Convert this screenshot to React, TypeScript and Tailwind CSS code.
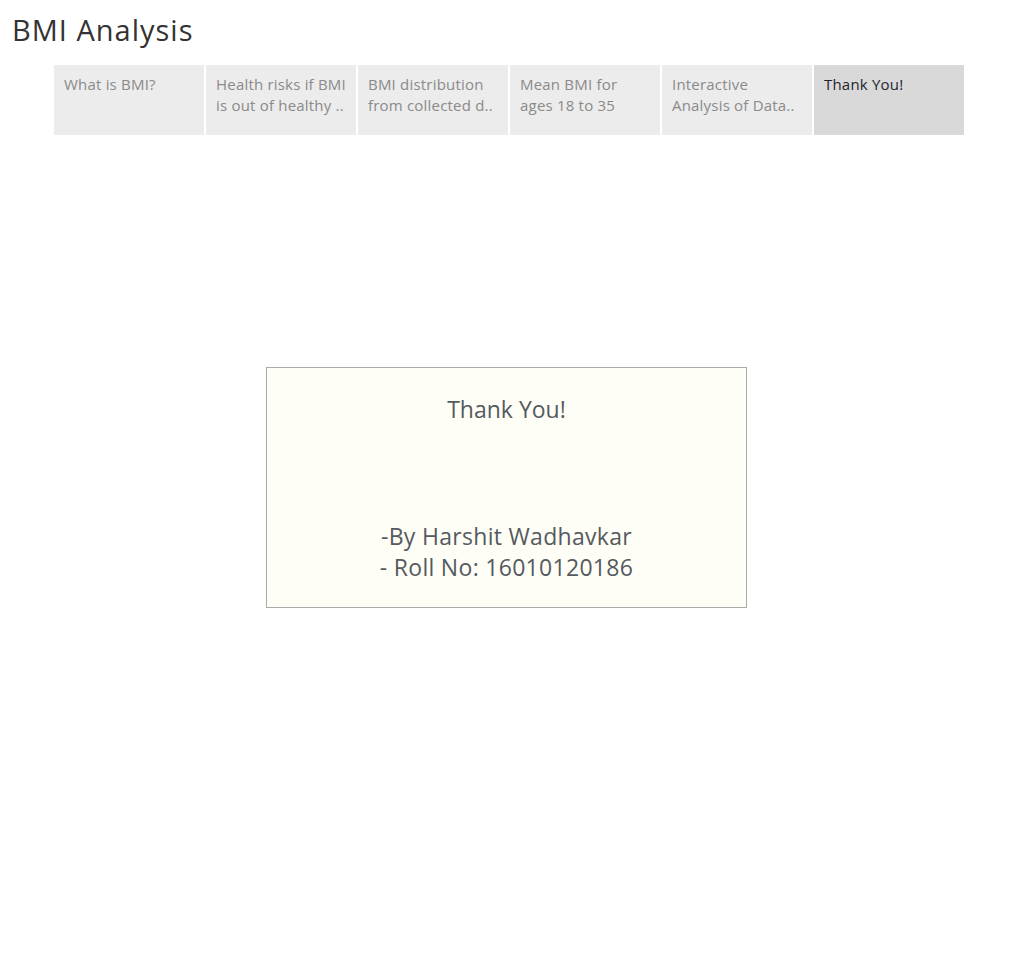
const tabs = [
  { label: 'What is BMI?', lines: ['What is BMI?'] },
  { label: 'Health risks', lines: ['Health risks if BMI', 'is out of healthy ..'] },
  { label: 'BMI distribution', lines: ['BMI distribution', 'from collected d..'] },
  { label: 'Mean BMI', lines: ['Mean BMI for', 'ages 18 to 35'] },
  { label: 'Interactive', lines: ['Interactive', 'Analysis of Data..'] },
  { label: 'Thank You!', lines: ['Thank You!'], active: true },
];

export default function App() {
  return (
    <div className="w-[1016px] h-[964px] bg-white font-['Open_Sans',sans-serif]">
      <h1 className="pl-3 pt-[11px] text-[29px] leading-[38px] tracking-[1px] text-[#333333]">BMI Analysis</h1>

      {/* story points */}
      <div className="flex gap-[2px] pl-[54px] mt-[16px]">
        {tabs.map(t => (
          <div
            key={t.label}
            className={
              t.active
                ? 'w-[150px] h-[70px] bg-[#d9d9d9] px-[10px] pt-[9px] text-[15px] leading-[21px] tracking-[0.2px] text-[#1f1f2f]'
                : 'w-[150px] h-[70px] bg-[#ececec] px-[10px] pt-[9px] text-[15px] leading-[21px] tracking-[0.2px] text-[#8a8a8a]'
            }
          >
            {t.lines.map(l => <div key={l} className="whitespace-nowrap">{l}</div>)}
          </div>
        ))}
      </div>

      <div className="ml-[266px] mt-[232px] w-[481px] h-[241px] border border-[#aaaaaa] bg-[#fffef6] flex flex-col items-center text-[#555a60]">
        <div className="mt-[26px] text-[23px] leading-[30px]">Thank You!</div>
        <div className="mt-[97px] text-[23px] leading-[31px] tracking-[0.3px] text-center">
          <div>-By Harshit Wadhavkar</div>
          <div>- Roll No: 16010120186</div>
        </div>
      </div>
    </div>
  );
}
